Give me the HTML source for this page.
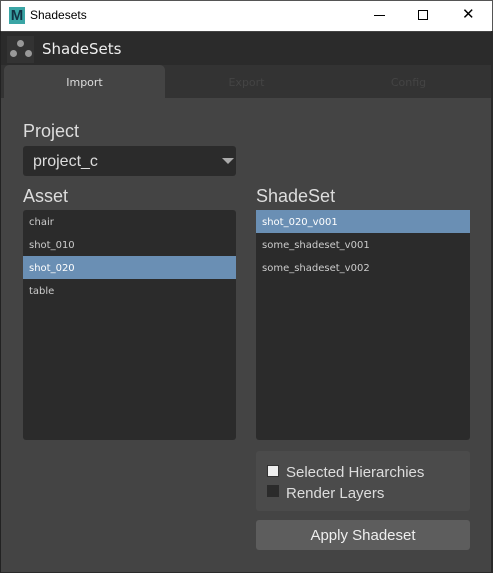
<!DOCTYPE html>
<html><head><style>
*{margin:0;padding:0;box-sizing:border-box}
body{width:493px;height:573px;overflow:hidden;background:#444;font-family:"Liberation Sans","DejaVu Sans",sans-serif;position:relative}
.abs{position:absolute}
.title{left:0;top:0;width:493px;height:31px;background:#fff;border:1px solid #555;border-bottom:none}
.win{left:0;top:31px;width:493px;height:542px;background:#444;border-left:1px solid #222;border-right:2px solid #2a2a2a;border-bottom:1px solid #2a2a2a}
.hdr{left:1px;top:32px;width:490px;height:33px;background:#2b2b2b}
.tabs{left:1px;top:65px;width:490px;height:33px;background:#333}
.tab{top:66px;height:33px;font-size:11px;text-align:center;line-height:33px;font-family:"DejaVu Sans",sans-serif}
.lbl{color:#ddd;font-size:18px}
.list{background:#2b2b2b;border-radius:3px}
.item{font-family:"DejaVu Sans",sans-serif;font-size:10px;color:#ccc;height:23px;line-height:25px;padding-left:6px}
.sel{background:#6a8fb4;color:#fff}
</style></head><body>
<div class="abs title"></div>
<div class="abs" style="left:9px;top:7px;width:16px;height:17px;background:#3aa5a5;color:#134;font-weight:bold;font-size:15px;line-height:17px;text-align:center">M</div>
<div class="abs" style="left:30px;top:8px;font-size:12px;color:#000">Shadesets</div>
<div class="abs" style="left:374px;top:15px;width:11px;height:1px;background:#000"></div>
<div class="abs" style="left:418px;top:10px;width:10px;height:10px;border:1px solid #000"></div>
<div class="abs" style="left:462px;top:5px;font-size:15px;color:#000">✕</div>
<div class="abs win"></div>
<div class="abs hdr"></div>
<div class="abs" style="left:7px;top:36px;width:27px;height:27px;background:#333"></div>
<div class="abs" style="left:17px;top:40px;width:7px;height:7px;border-radius:50%;background:#999"></div>
<div class="abs" style="left:10px;top:50px;width:7px;height:7px;border-radius:50%;background:#999"></div>
<div class="abs" style="left:25px;top:50px;width:7px;height:7px;border-radius:50%;background:#999"></div>
<div class="abs" style="left:42px;top:40px;font-size:15px;color:#eee;font-family:'DejaVu Sans',sans-serif">ShadeSets</div>
<div class="abs tabs"></div>
<div class="abs" style="left:4px;top:65px;width:161px;height:33px;background:#444;border-radius:5px 5px 0 0"></div>
<div class="abs tab" style="left:4px;width:161px;color:#ddd">Import</div>
<div class="abs tab" style="left:165px;width:163px;color:#444">Export</div>
<div class="abs tab" style="left:328px;width:161px;color:#444">Config</div>
<div class="abs lbl" style="left:23px;top:121px">Project</div>
<div class="abs list" style="left:23px;top:146px;width:213px;height:30px"></div>
<div class="abs" style="left:33px;top:153px;font-size:16px;color:#ddd">project_c</div>
<div class="abs" style="left:222px;top:158px;width:0;height:0;border-left:6px solid transparent;border-right:6px solid transparent;border-top:6px solid #aaa"></div>
<div class="abs lbl" style="left:23px;top:186px">Asset</div>
<div class="abs list" style="left:23px;top:210px;width:213px;height:230px">
<div class="item">chair</div><div class="item">shot_010</div><div class="item sel">shot_020</div><div class="item">table</div></div>
<div class="abs lbl" style="left:256px;top:186px">ShadeSet</div>
<div class="abs list" style="left:256px;top:210px;width:214px;height:230px">
<div class="item sel">shot_020_v001</div><div class="item">some_shadeset_v001</div><div class="item">some_shadeset_v002</div></div>
<div class="abs" style="left:256px;top:451px;width:214px;height:60px;background:#4b4b4b;border-radius:3px"></div>
<div class="abs" style="left:267px;top:465px;width:12px;height:12px;background:#eee;border:1px solid #333"></div>
<div class="abs" style="left:267px;top:485px;width:12px;height:12px;background:#2b2b2b"></div>
<div class="abs" style="left:286px;top:464px;font-size:15px;color:#ddd">Selected Hierarchies</div>
<div class="abs" style="left:286px;top:485px;font-size:15px;color:#ddd">Render Layers</div>
<div class="abs" style="left:256px;top:520px;width:214px;height:30px;background:#5d5d5d;border-radius:3px;color:#eee;font-size:15px;text-align:center;line-height:32px">Apply Shadeset</div>
</body></html>
